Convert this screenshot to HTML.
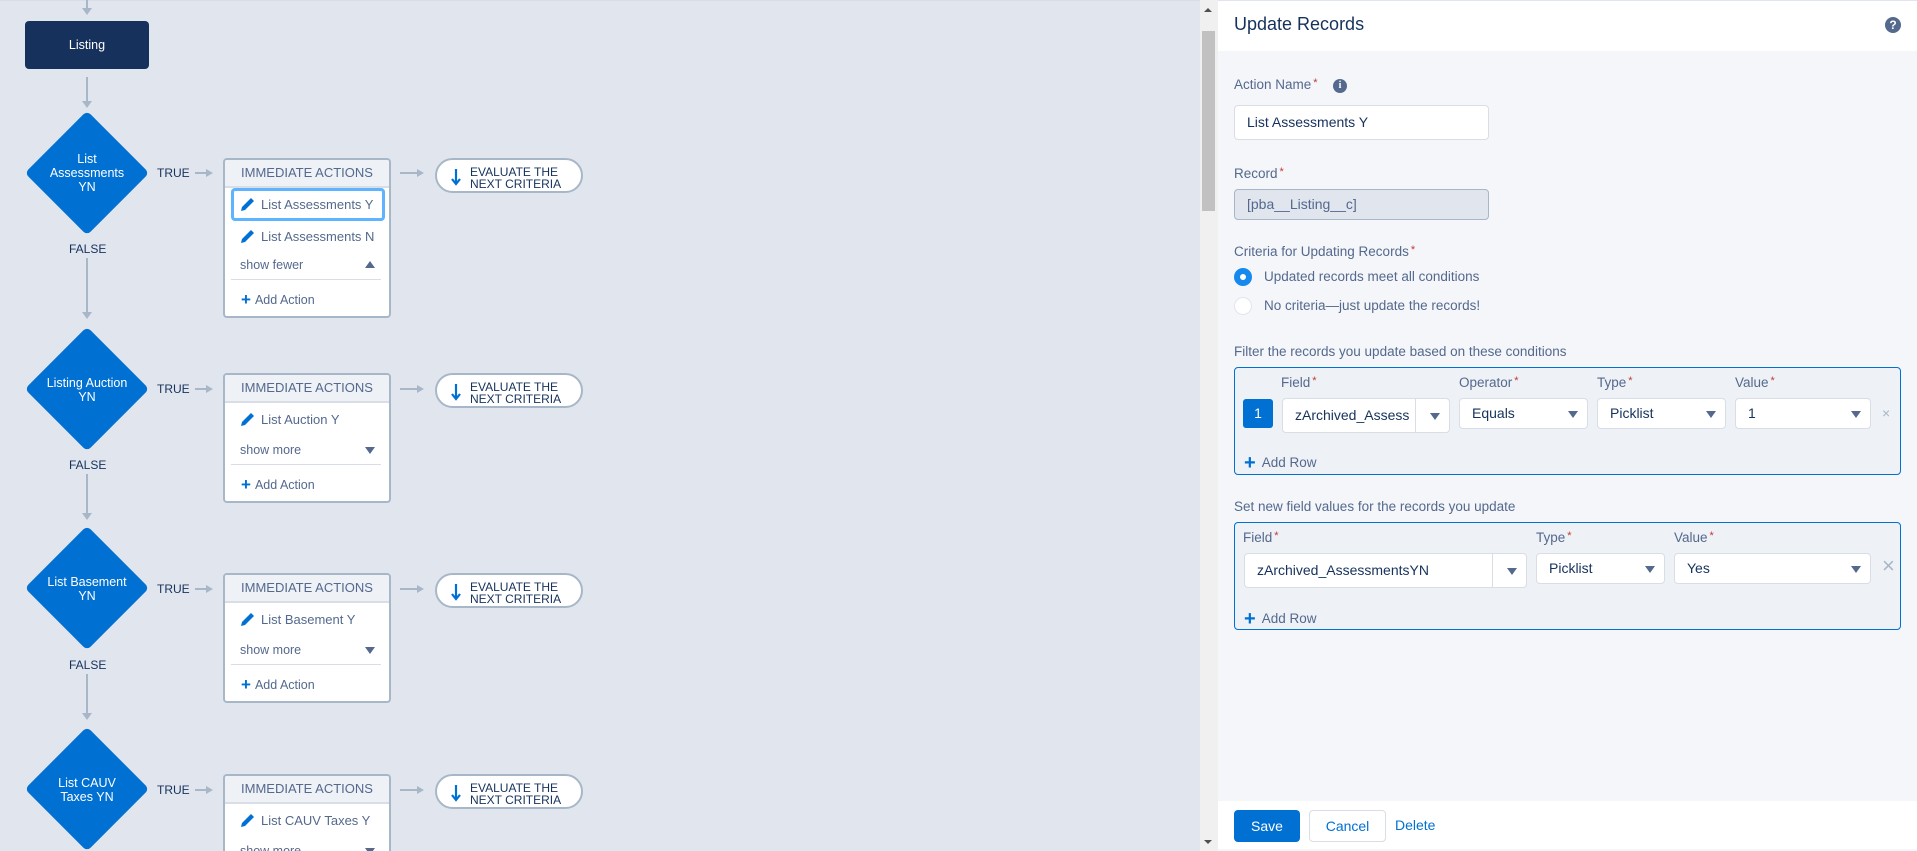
<!DOCTYPE html>
<html style="width:1917px;height:851px;overflow:hidden"><head><meta charset="utf-8"><style>
*{box-sizing:border-box;margin:0;padding:0}
body{width:1917px;height:851px;overflow:hidden;background:#e0e5ee;font-family:"Liberation Sans",Arial,sans-serif;position:relative;color:#16325c}
.a{position:absolute}
.vl{position:absolute;width:2px;background:#a8b7c7;left:86px}
.ah{position:absolute;left:82px;width:0;height:0;border-left:5px solid transparent;border-right:5px solid transparent;border-top:7px solid #a8b7c7}
.dia{position:absolute;width:88px;height:88px;background:#0070d2;transform:rotate(45deg);border-radius:5px;left:43px}
.dt{position:absolute;left:25px;width:124px;text-align:center;color:#fff;font-size:12.5px;line-height:14px}
.lbl{position:absolute;font-size:12px;color:#16325c}
.hl{position:absolute;height:2px;background:#a8b7c7}
.hh{position:absolute;width:0;height:0;border-top:4px solid transparent;border-bottom:4px solid transparent;border-left:7px solid #a8b7c7}
.box{position:absolute;left:223px;width:168px;border:2px solid #a8b7c7;border-radius:4px;background:#fff;overflow:hidden}
.bh{height:28px;background:#eef1f6;border-bottom:2px solid #d8dde6;text-align:center;font-size:13px;line-height:26px;color:#54698d;position:relative}
.it{position:absolute;left:6px;right:4px;height:33px;font-size:13px;color:#54698d;line-height:33px;padding-left:30px}
.it svg{position:absolute;left:9px;top:8px}
.sel{border:3px solid #5eb4ff;border-radius:4px;line-height:27px;padding-left:27px}
.sel svg{left:6px;top:5px}
.sm{position:absolute;left:15px;font-size:12.5px;color:#54698d}
.tri{position:absolute;right:14px;width:0;height:0;border-left:5px solid transparent;border-right:5px solid transparent}
.dv{position:absolute;left:6px;right:8px;height:1px;background:#d8dde6}
.aa{position:absolute;left:16px;font-size:12.5px;color:#54698d}
.aa b{color:#0070d2;font-size:17px;font-weight:bold;margin-right:4px;position:relative;top:1px}
.pill{position:absolute;left:435px;width:148px;height:35px;border:2px solid #a8b7c7;border-radius:18px;background:#fff;font-size:12px;line-height:12px;padding:6px 0 0 33px;color:#16325c}
.pill svg{position:absolute;left:14px;top:8px}
.sb{position:absolute;left:1200px;top:0;width:18px;height:851px;background:#f0f0f0}
.pn{position:absolute;left:1218px;top:0;width:699px;height:851px;background:#f4f6f9}
.fl{position:absolute;font-size:13.5px;color:#54698d}
.fl i{color:#c23934;font-style:normal;font-size:11px;vertical-align:top;margin-left:2px}
.in{position:absolute;background:#fff;border:1px solid #d8dde6;border-radius:4px;font-size:14px;color:#16325c;padding-left:12px}
.dd:after{content:"";position:absolute;right:9px;top:50%;margin-top:-3px;border-left:5px solid transparent;border-right:5px solid transparent;border-top:7px solid #54698d}
.fb{position:absolute;left:1234px;width:667px;border:1px solid #0070d2;border-radius:4px;background:#eef1f6}
.add{position:absolute;font-size:13.5px;color:#54698d}
.add b{color:#0070d2;font-size:20px;position:relative;top:2px;margin-right:6px}
</style></head><body>
<div class="a" style="left:0;top:0;width:1200px;height:1px;background:#d8dde6"></div>
<div class="vl" style="top:0;height:10px"></div><div class="ah" style="top:8px"></div>
<div class="a" style="left:25px;top:21px;width:124px;height:48px;background:#16325c;border-radius:4px;color:#fff;font-size:12.5px;text-align:center;line-height:48px">Listing</div>
<div class="vl" style="top:77px;height:26px"></div><div class="ah" style="top:101px"></div>

<div class="dia" style="top:129px"></div>
<div class="dt" style="top:152px">List<br>Assessments<br>YN</div>
<div class="lbl" style="left:157px;top:166px">TRUE</div>
<div class="hl" style="left:195px;top:172px;width:12px"></div><div class="hh" style="left:206px;top:169px"></div>
<div class="box" style="top:158px;height:160px"><div class="bh">IMMEDIATE ACTIONS</div>
<div class="it sel" style="top:28px"><svg width="16" height="16" viewBox="0 0 16 16"><path d="M1 15l1-4 9-9 3 3-9 9z M12 1l3 3" fill="#0070d2"/></svg>List Assessments Y</div>
<div class="it" style="top:60px"><svg width="16" height="16" viewBox="0 0 16 16"><path d="M1 15l1-4 9-9 3 3-9 9z" fill="#0070d2"/></svg>List Assessments N</div>
<div class="sm" style="top:98px">show fewer</div><div class="tri" style="top:101px;border-bottom:7px solid #54698d"></div>
<div class="dv" style="top:119px"></div>
<div class="aa" style="top:129px"><b>+</b>Add Action</div></div>
<div class="hl" style="left:400px;top:172px;width:18px"></div><div class="hh" style="left:417px;top:169px"></div>
<div class="pill" style="top:158px"><svg width="10" height="18" viewBox="0 0 10 18"><path d="M5 1v15M1 11l4 5 4-5" stroke="#0070d2" stroke-width="2.2" fill="none"/></svg>EVALUATE THE<br>NEXT CRITERIA</div>
<div class="lbl" style="left:69px;top:242px">FALSE</div>
<div class="vl" style="top:258px;height:55px"></div><div class="ah" style="top:312px"></div>

<div class="dia" style="top:345px"></div>
<div class="dt" style="top:376px">Listing Auction<br>YN</div>
<div class="lbl" style="left:157px;top:382px">TRUE</div>
<div class="hl" style="left:195px;top:388px;width:12px"></div><div class="hh" style="left:206px;top:385px"></div>
<div class="box" style="top:373px;height:130px"><div class="bh">IMMEDIATE ACTIONS</div>
<div class="it" style="top:28px"><svg width="16" height="16" viewBox="0 0 16 16"><path d="M1 15l1-4 9-9 3 3-9 9z" fill="#0070d2"/></svg>List Auction Y</div>
<div class="sm" style="top:68px">show more</div><div class="tri" style="top:72px;border-top:7px solid #54698d"></div>
<div class="dv" style="top:89px"></div>
<div class="aa" style="top:99px"><b>+</b>Add Action</div></div>
<div class="hl" style="left:400px;top:388px;width:18px"></div><div class="hh" style="left:417px;top:385px"></div>
<div class="pill" style="top:373px"><svg width="10" height="18" viewBox="0 0 10 18"><path d="M5 1v15M1 11l4 5 4-5" stroke="#0070d2" stroke-width="2.2" fill="none"/></svg>EVALUATE THE<br>NEXT CRITERIA</div>
<div class="lbl" style="left:69px;top:458px">FALSE</div>
<div class="vl" style="top:474px;height:40px"></div><div class="ah" style="top:513px"></div>

<div class="dia" style="top:544px"></div>
<div class="dt" style="top:575px">List Basement<br>YN</div>
<div class="lbl" style="left:157px;top:582px">TRUE</div>
<div class="hl" style="left:195px;top:588px;width:12px"></div><div class="hh" style="left:206px;top:585px"></div>
<div class="box" style="top:573px;height:130px"><div class="bh">IMMEDIATE ACTIONS</div>
<div class="it" style="top:28px"><svg width="16" height="16" viewBox="0 0 16 16"><path d="M1 15l1-4 9-9 3 3-9 9z" fill="#0070d2"/></svg>List Basement Y</div>
<div class="sm" style="top:68px">show more</div><div class="tri" style="top:72px;border-top:7px solid #54698d"></div>
<div class="dv" style="top:89px"></div>
<div class="aa" style="top:99px"><b>+</b>Add Action</div></div>
<div class="hl" style="left:400px;top:588px;width:18px"></div><div class="hh" style="left:417px;top:585px"></div>
<div class="pill" style="top:573px"><svg width="10" height="18" viewBox="0 0 10 18"><path d="M5 1v15M1 11l4 5 4-5" stroke="#0070d2" stroke-width="2.2" fill="none"/></svg>EVALUATE THE<br>NEXT CRITERIA</div>
<div class="lbl" style="left:69px;top:658px">FALSE</div>
<div class="vl" style="top:674px;height:40px"></div><div class="ah" style="top:713px"></div>

<div class="dia" style="top:745px"></div>
<div class="dt" style="top:776px">List CAUV<br>Taxes YN</div>
<div class="lbl" style="left:157px;top:783px">TRUE</div>
<div class="hl" style="left:195px;top:789px;width:12px"></div><div class="hh" style="left:206px;top:786px"></div>
<div class="box" style="top:774px;height:77px;border-bottom:none;border-radius:4px 4px 0 0"><div class="bh">IMMEDIATE ACTIONS</div>
<div class="it" style="top:28px"><svg width="16" height="16" viewBox="0 0 16 16"><path d="M1 15l1-4 9-9 3 3-9 9z" fill="#0070d2"/></svg>List CAUV Taxes Y</div>
<div class="sm" style="top:68px">show more</div><div class="tri" style="top:72px;border-top:7px solid #54698d"></div></div>
<div class="hl" style="left:400px;top:789px;width:18px"></div><div class="hh" style="left:417px;top:786px"></div>
<div class="pill" style="top:774px"><svg width="10" height="18" viewBox="0 0 10 18"><path d="M5 1v15M1 11l4 5 4-5" stroke="#0070d2" stroke-width="2.2" fill="none"/></svg>EVALUATE THE<br>NEXT CRITERIA</div>

<div class="sb"><div class="a" style="left:4px;top:8px;border-left:4px solid transparent;border-right:4px solid transparent;border-bottom:4px solid #505050"></div>
<div class="a" style="left:2px;top:31px;width:13px;height:180px;background:#c1c1c1"></div>
<div class="a" style="left:4px;top:840px;border-left:4px solid transparent;border-right:4px solid transparent;border-top:4px solid #505050"></div></div>

<div class="pn"></div>
<div class="a" style="left:1218px;top:0;width:699px;height:51px;background:#fff;border-top:1px solid #e0e5ee"></div>
<div class="a" style="left:1234px;top:14px;font-size:18px;color:#16325c">Update Records</div>
<div class="a" style="left:1885px;top:17px;width:16px;height:16px;border-radius:50%;background:#54698d;color:#fff;font-size:12px;font-weight:bold;text-align:center;line-height:16px">?</div>

<div class="fl" style="left:1234px;top:77px">Action Name<i>*</i></div>
<div class="a" style="left:1333px;top:79px;width:14px;height:14px;border-radius:50%;background:#54698d;color:#fff;font-size:10px;font-weight:bold;text-align:center;line-height:14px;font-family:'Liberation Serif',serif">i</div>
<div class="in" style="left:1234px;top:105px;width:255px;height:35px;line-height:33px">List Assessments Y</div>
<div class="fl" style="left:1234px;top:166px">Record<i>*</i></div>
<div class="in" style="left:1234px;top:189px;width:255px;height:31px;line-height:29px;background:#e0e5ee;border-color:#a8b7c7;color:#54698d">[pba__Listing__c]</div>
<div class="fl" style="left:1234px;top:244px">Criteria for Updating Records<i>*</i></div>
<div class="a" style="left:1234px;top:268px;width:18px;height:18px;border-radius:50%;background:#1589ee"><div class="a" style="left:6px;top:6px;width:6px;height:6px;border-radius:50%;background:#fff"></div></div>
<div class="fl" style="left:1264px;top:269px;color:#54698d">Updated records meet all conditions</div>
<div class="a" style="left:1234px;top:297px;width:18px;height:18px;border-radius:50%;background:#fff;border:1px solid #e0e5ee"></div>
<div class="fl" style="left:1264px;top:298px">No criteria—just update the records!</div>

<div class="fl" style="left:1234px;top:344px">Filter the records you update based on these conditions</div>
<div class="fb" style="top:367px;height:108px"></div>
<div class="fl" style="left:1281px;top:375px">Field<i>*</i></div>
<div class="fl" style="left:1459px;top:375px">Operator<i>*</i></div>
<div class="fl" style="left:1597px;top:375px">Type<i>*</i></div>
<div class="fl" style="left:1735px;top:375px">Value<i>*</i></div>
<div class="a" style="left:1243px;top:399px;width:30px;height:29px;background:#0070d2;border-radius:3px;color:#fff;font-size:14px;text-align:center;line-height:29px">1</div>
<div class="in dd" style="left:1282px;top:398px;width:168px;height:35px;line-height:33px">zArchived_Assess<div class="a" style="left:132px;top:0;width:1px;height:33px;background:#d8dde6"></div></div>
<div class="in dd" style="left:1459px;top:398px;width:129px;height:31px;line-height:29px">Equals</div>
<div class="in dd" style="left:1597px;top:398px;width:129px;height:31px;line-height:29px">Picklist</div>
<div class="in dd" style="left:1735px;top:398px;width:136px;height:31px;line-height:29px">1</div>
<div class="a" style="left:1882px;top:405px;font-size:14px;color:#a8b7c7">×</div>
<div class="add" style="left:1244px;top:450px"><b>+</b>Add Row</div>

<div class="fl" style="left:1234px;top:499px">Set new field values for the records you update</div>
<div class="fb" style="top:522px;height:108px"></div>
<div class="fl" style="left:1243px;top:530px">Field<i>*</i></div>
<div class="fl" style="left:1536px;top:530px">Type<i>*</i></div>
<div class="fl" style="left:1674px;top:530px">Value<i>*</i></div>
<div class="in dd" style="left:1244px;top:553px;width:283px;height:35px;line-height:33px">zArchived_AssessmentsYN<div class="a" style="left:247px;top:0;width:1px;height:33px;background:#d8dde6"></div></div>
<div class="in dd" style="left:1536px;top:553px;width:129px;height:31px;line-height:29px">Picklist</div>
<div class="in dd" style="left:1674px;top:553px;width:197px;height:31px;line-height:29px">Yes</div>
<div class="a" style="left:1882px;top:555px;font-size:22px;color:#a8b7c7;line-height:22px">×</div>
<div class="add" style="left:1244px;top:606px"><b>+</b>Add Row</div>

<div class="a" style="left:1218px;top:801px;width:699px;height:48px;background:#fff"></div>
<div class="a" style="left:1234px;top:810px;width:66px;height:32px;background:#0070d2;border-radius:4px;color:#fff;font-size:14px;text-align:center;line-height:32px">Save</div>
<div class="a" style="left:1309px;top:810px;width:77px;height:32px;background:#fff;border:1px solid #d8dde6;border-radius:4px;color:#0070d2;font-size:14px;text-align:center;line-height:30px">Cancel</div>
<div class="a" style="left:1395px;top:817px;font-size:14px;color:#0070d2">Delete</div>
</body></html>
